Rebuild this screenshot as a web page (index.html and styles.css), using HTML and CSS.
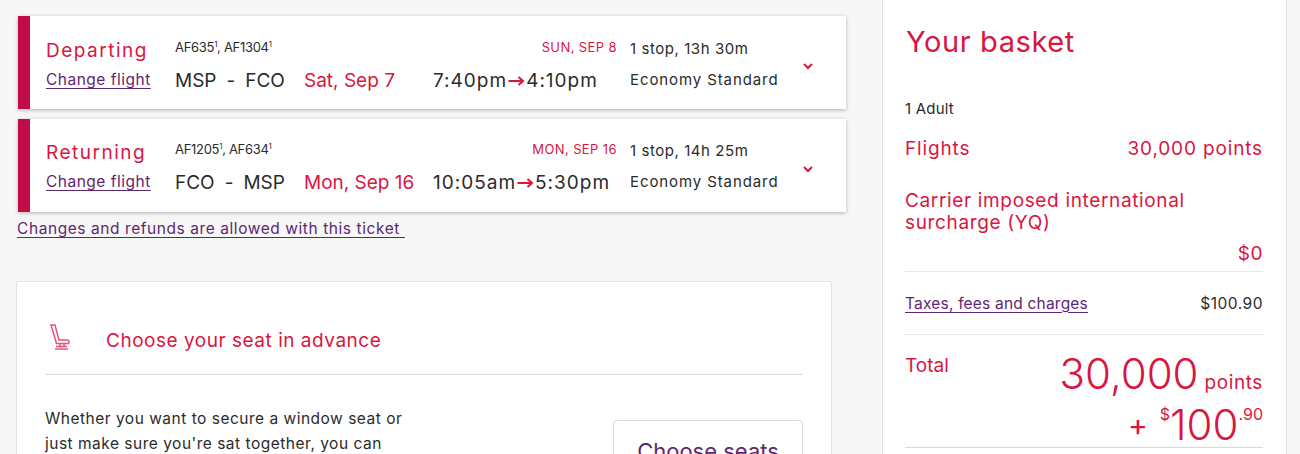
FILE: index.html
```html
<!DOCTYPE html>
<html lang="en">
<head>
    <meta charset="UTF-8">
    <meta name="viewport" content="width=device-width, initial-scale=1.0">
    <title>Your basket</title>
    <link rel="stylesheet" href="styles.css">
</head>
<body>
    <div class="page">
        <div class="main">
            <div class="flight-card">
                <div class="flight-label">
                    <div class="direction">Departing</div>
                    <a class="link" href="#">Change flight</a>
                </div>
                <div class="flight-info">
                    <div class="flight-top">
                        <span class="codes">AF635<sup>1</sup>, AF1304<sup>1</sup></span>
                        <span class="arrival-date">SUN, SEP 8</span>
                    </div>
                    <div class="flight-bottom">
                        <span class="route">MSP<i>-</i>FCO</span>
                        <span class="date">Sat, Sep 7</span>
                        <span class="times">7:40pm<svg class="arrow" viewBox="0 0 16 10"><path d="M0 5h14M10 1l4.500 4-4.500 4"/></svg>4:10pm</span>
                    </div>
                </div>
                <div class="flight-meta">
                    <div>1 stop, 13h 30m</div>
                    <div class="cabin">Economy Standard</div>
                </div>
                <svg class="chevron" viewBox="0 0 10 7"><path d="M1 1l4 4 4-4"/></svg>
            </div>

            <div class="flight-card">
                <div class="flight-label">
                    <div class="direction">Returning</div>
                    <a class="link" href="#">Change flight</a>
                </div>
                <div class="flight-info">
                    <div class="flight-top">
                        <span class="codes">AF1205<sup>1</sup>, AF634<sup>1</sup></span>
                        <span class="arrival-date">MON, SEP 16</span>
                    </div>
                    <div class="flight-bottom">
                        <span class="route">FCO<i>-</i>MSP</span>
                        <span class="date">Mon, Sep 16</span>
                        <span class="times">10:05am<svg class="arrow" viewBox="0 0 16 10"><path d="M0 5h14M10 1l4.500 4-4.500 4"/></svg>5:30pm</span>
                    </div>
                </div>
                <div class="flight-meta">
                    <div>1 stop, 14h 25m</div>
                    <div class="cabin">Economy Standard</div>
                </div>
                <svg class="chevron" viewBox="0 0 10 7"><path d="M1 1l4 4 4-4"/></svg>
            </div>

            <a class="link ticket-link" href="#">Changes and refunds are allowed with this ticket&nbsp;</a>

            <div class="seat-panel">
                <div class="seat-head">
                    <svg class="seat-icon" viewBox="0 0 20 26">
                        <path d="M1 1h4l4 15h8c1.500 0 2.500 1 2 2.500l-.5 1H6.500z"/>
                        <path d="M5 25h13M6 22.500h11M10 20v3M14 20v3"/>
                    </svg>
                    <h2>Choose your seat in advance</h2>
                </div>
                <div class="seat-body">
                    <p>Whether you want to secure a window seat or just make sure you're sat together, you can</p>
                    <button class="seat-button">Choose seats</button>
                </div>
            </div>
        </div>

        <div class="basket">
            <h1>Your basket</h1>
            <div class="adults">1 Adult</div>
            <div class="row red flights-row"><span>Flights</span><span>30,000 points</span></div>
            <div class="surcharge red">Carrier imposed international surcharge (YQ)</div>
            <div class="row red zero-row"><span></span><span>$0</span></div>
            <div class="row taxes-row"><a class="link" href="#">Taxes, fees and charges</a><span>$100.90</span></div>
            <div class="total red">
                <span class="total-label">Total</span>
                <div class="total-values">
                    <div class="total-points"><b>30,000</b> points</div>
                    <div class="total-cash"><span class="plus">+</span><sup>$</sup><b>100</b><sup>.90</sup></div>
                </div>
            </div>
        </div>
    </div>
</body>
</html>
```

FILE: styles.css
```css
html, body {
    margin: 0;
    height: 454px;
    overflow: hidden;
}
body {
    font-family: "Inter", "Liberation Sans", sans-serif;
    background: #f7f7f7;
    color: #2b2b2b;
}
.page {
    display: flex;
    align-items: flex-start;
}
.main {
    width: 832px;
    margin-left: 16px;
    padding-top: 16px;
}
.red {
    color: #d9163f;
}
.link {
    color: #5f2672;
    text-decoration: underline;
    text-underline-offset: 3px;
    text-decoration-thickness: 1px;
}

.flight-card {
    box-sizing: border-box;
    width: 828px;
    height: 93px;
    margin: 0 0 10px 2px;
    padding: 22px 0 0 16px;
    display: flex;
    position: relative;
    background: #fff;
    border-left: 12px solid #bf0d47;
    box-shadow: 0 1px 4px rgba(0,0,0,0.28);
}
.flight-card:first-child {
    padding-top: 23px;
}
.flight-label {
    width: 129px;
}
.direction {
    font-size: 19px;
    line-height: 24px;
    letter-spacing: 1.500px;
    color: #d9163f;
    margin-bottom: 6px;
}
.flight-label .link {
    font-size: 15.500px;
    line-height: 20px;
    letter-spacing: 0.500px;
}
.flight-info {
    width: 442px;
    margin-right: 13px;
}
.flight-top {
    display: flex;
    justify-content: space-between;
    align-items: center;
    height: 18px;
    margin-top: -1px;
}
.codes {
    font-size: 13px;
    letter-spacing: -0.3px;
}
.codes sup {
    font-size: 8px;
    line-height: 0;
}
.arrival-date {
    font-size: 13px;
    letter-spacing: 0.4px;
    color: #d9163f;
}
.flight-bottom {
    display: flex;
    align-items: center;
    margin-top: 13px;
    font-size: 19px;
    line-height: 24px;
}
.route {
    width: 129px;
}
.route i {
    font-style: normal;
    margin: 0 10px;
}
.date {
    width: 129px;
    color: #d9163f;
}
.times {
    display: flex;
    align-items: center;
    white-space: nowrap;
    letter-spacing: 1px;
}
.arrow {
    width: 17px;
    height: 10px;
    margin: 0 1px;
    fill: none;
    stroke: #d9163f;
    stroke-width: 2;
}
.flight-meta {
    font-size: 15px;
    letter-spacing: 0.560px;
    line-height: 20px;
}
.flight-meta .cabin {
    margin-top: 11px;
    letter-spacing: 0.900px;
}
.chevron {
    position: absolute;
    left: 773px;
    top: 47px;
    width: 10px;
    height: 7px;
    fill: none;
    stroke: #d9163f;
    stroke-width: 2;
}

.ticket-link {
    display: block;
    margin: -3px 0 0 1px;
    font-size: 15.500px;
    line-height: 20px;
    letter-spacing: 0.570px;
}

.seat-panel {
    box-sizing: border-box;
    width: 816px;
    height: 260px;
    margin-top: 42px;
    padding: 0 28px;
    background: #fff;
    border: 1px solid #e2e2e2;
    border-radius: 2px;
}
.seat-head {
    display: flex;
    align-items: center;
    box-sizing: border-box;
    height: 93px;
    padding-top: 25px;
    border-bottom: 1px solid #dcdcdc;
}
.seat-icon {
    width: 20px;
    height: 26px;
    margin: -8px 36px 0 5px;
    fill: none;
    stroke: #e2557a;
    stroke-width: 1.500;
}
.seat-head h2 {
    margin: 0;
    font-size: 19px;
    font-weight: 400;
    letter-spacing: 0.520px;
    color: #d9163f;
}
.seat-body {
    display: flex;
    justify-content: space-between;
    align-items: flex-start;
    padding-top: 31px;
}
.seat-body p {
    width: 370px;
    margin: 0;
    font-size: 15.500px;
    line-height: 25px;
    letter-spacing: 0.500px;
}
.seat-button {
    width: 190px;
    height: 62px;
    margin-top: 14px;
    font-family: inherit;
    font-size: 22px;
    color: #5f2672;
    background: #fff;
    border: 1px solid #dcdcdc;
    border-radius: 4px;
}

.basket {
    box-sizing: border-box;
    width: 405px;
    height: 454px;
    margin-left: 34px;
    padding: 25px 23px 0 22px;
    background: #fff;
    border-left: 1px solid #e2e2e2;
    border-right: 1px solid #e2e2e2;
}
.basket h1 {
    margin: 0 0 0 1px;
    font-size: 29px;
    line-height: 34px;
    font-weight: 400;
    letter-spacing: 0.600px;
    color: #d9163f;
}
.adults {
    margin-top: 40px;
    font-size: 15px;
    line-height: 20px;
    letter-spacing: 0.2px;
}
.row {
    display: flex;
    justify-content: space-between;
    align-items: center;
}
.flights-row {
    margin-top: 18px;
    font-size: 19px;
    line-height: 24px;
    letter-spacing: 0.850px;
}
.surcharge {
    margin-top: 29px;
    font-size: 19px;
    line-height: 22px;
    letter-spacing: 0.650px;
}
.zero-row {
    margin-top: 8px;
    padding-bottom: 5px;
    font-size: 19px;
    line-height: 24px;
    letter-spacing: 0.5px;
    border-bottom: 1px solid #e8e8e8;
}
.taxes-row {
    height: 62px;
    font-size: 15.500px;
    letter-spacing: 0.2px;
    border-bottom: 1px solid #e8e8e8;
}
.taxes-row span {
    letter-spacing: 0.5px;
}
.total {
    display: flex;
    justify-content: space-between;
    align-items: flex-start;
    height: 113px;
    padding-top: 19px;
    box-sizing: border-box;
    border-bottom: 1px solid #d8d8d8;
}
.total-label {
    font-size: 19px;
    line-height: 24px;
}
.total-values {
    text-align: right;
}
.total-values b {
    font-weight: 300;
}
.total-points {
    font-size: 19px;
    line-height: 44px;
    margin-top: -2px;
    letter-spacing: 0.6px;
}
.total-points b {
    font-size: 42px;
    letter-spacing: 0;
}
.total-cash {
    font-size: 25px;
    line-height: 40px;
}
.plus {
    margin-right: 12px;
    font-size: 30px;
    line-height: 0;
    vertical-align: 4px;
}
.total-cash b {
    font-size: 42px;
}
.total-cash sup {
    font-size: 16px;
    line-height: 0;
    vertical-align: 20px;
}
```
